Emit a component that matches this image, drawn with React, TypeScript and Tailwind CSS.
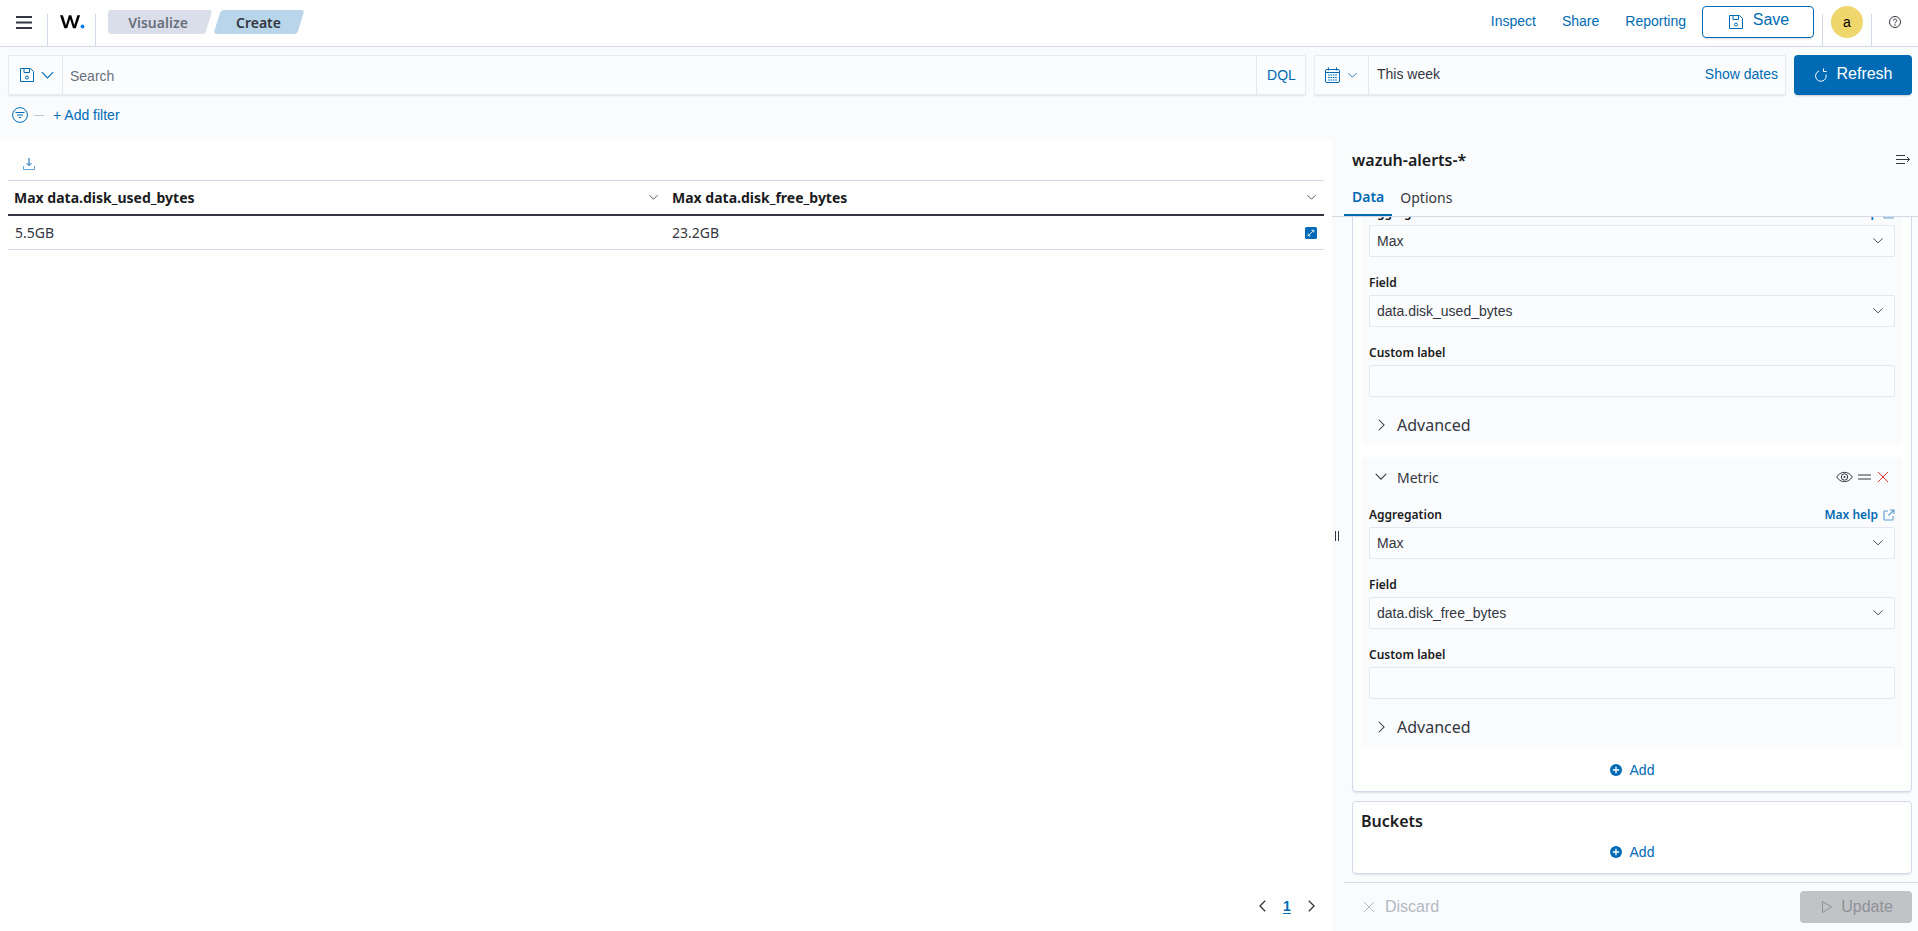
import React from "react";

const P = "#006bb4";

function Chevron({ dir = "down", size = 12, color = "#343741", width = 1.2, className = "" }: { dir?: string; size?: number; color?: string; width?: number; className?: string }) {
  const d = dir === "down" ? "M2 4.5 L8 10.5 L14 4.5" : dir === "right" ? "M5.5 2 L11.5 8 L5.5 14" : "M10.5 2 L4.5 8 L10.5 14";
  return (
    <svg width={size} height={size} viewBox="0 0 16 16" fill="none" className={className}>
      <path d={d} stroke={color} strokeWidth={width} />
    </svg>
  );
}

function SaveIcon({ color = P, size = 16 }: { color?: string; size?: number }) {
  return (
    <svg width={size} height={size} viewBox="0 0 16 16" fill="none">
      <path d="M1.5 1.5 H11.5 L14.5 4.5 V14.5 H1.5 Z" stroke={color} strokeWidth="1" />
      <path d="M5 1.5 V5.5 H10.5 V1.5" stroke={color} strokeWidth="1" />
      <circle cx="8" cy="10.5" r="1.5" stroke={color} strokeWidth="1" />
    </svg>
  );
}

function SelectBox({ value }: { value: string }) {
  return (
    <div className="h-[32px] bg-[#fbfcfd] border border-[#e3e7ef] rounded-[2px] flex items-center justify-between pl-[7px] pr-[10px] font-['Liberation_Sans'] text-[14px] text-[#343741]">
      <span>{value}</span>
      <Chevron />
    </div>
  );
}

function Label({ text, help }: { text: string; help?: boolean }) {
  return (
    <div className="h-[24px] flex items-center justify-between font-['Noto_Sans'] text-[12px] font-semibold text-[#1a1c21]">
      <span>{text}</span>
      {help && (
        <span className="flex items-center gap-[5px] text-[#006bb4] font-semibold">
          Max help
          <svg width="12" height="12" viewBox="0 0 12 12" fill="none">
            <path d="M5 2 H1.5 Q1 2 1 2.5 V10.5 Q1 11 1.5 11 H9.5 Q10 11 10 10.5 V7" stroke="#5b9dcf" strokeWidth="1.1" />
            <path d="M7 1 H11 V5 M11 1 L5.5 6.5" stroke="#5b9dcf" strokeWidth="1.1" />
          </svg>
        </span>
      )}
    </div>
  );
}

function Advanced() {
  return (
    <div className="h-[40px] mt-[8px] -mx-[8px] pl-[13px] flex items-center gap-[9px] font-['Noto_Sans'] text-[16px] text-[#343741]">
      <Chevron dir="right" size={14} />
      <span>Advanced</span>
    </div>
  );
}

function MetricFields({ field }: { field: string }) {
  return (
    <div className="px-[8px]">
      <Label text="Aggregation" help />
      <SelectBox value="Max" />
      <div className="mt-[14px]">
        <Label text="Field" />
        <SelectBox value={field} />
      </div>
      <div className="mt-[14px]">
        <Label text="Custom label" />
        <div className="h-[32px] bg-[#fbfcfd] border border-[#e3e7ef] rounded-[2px]" />
      </div>
      <Advanced />
    </div>
  );
}

function AddButton() {
  return (
    <div className="flex items-center justify-center gap-[8px] font-['Liberation_Sans'] text-[14px] text-[#006bb4]">
      <svg width="12" height="12" viewBox="0 0 12 12">
        <circle cx="6" cy="6" r="6" fill="#006bb4" />
        <path d="M6 2.8 V9.2 M2.8 6 H9.2" stroke="#fff" strokeWidth="1.3" />
      </svg>
      <span>Add</span>
    </div>
  );
}

export default function App() {
  return (
    <div className="w-[1918px] h-[931px] overflow-hidden flex flex-col bg-white font-['Liberation_Sans',sans-serif] text-[14px] text-[#343741]">
      {/* Top nav */}
      <header className="h-[47px] shrink-0 border-b border-[#d3dae6] flex items-start">
        <div className="w-[47px] h-[46px] flex items-center justify-center pb-[1px]">
          <svg width="16" height="13" viewBox="0 0 16 13">
            <path d="M0 1 H16 M0 6.5 H16 M0 12 H16" stroke="#343741" strokeWidth="1.8" />
          </svg>
        </div>
        <div className="mt-[14px] h-[32px] w-[49px] border-x border-[#d3dae6] flex pl-[12px] pt-[0px]">
          <svg width="28" height="16" viewBox="0 0 28 16">
            <path d="M0 1.2 H2.9 L5.9 11.2 L8.9 1.2 H11.3 L14.3 11.2 L17.3 1.2 H20.1 L15.8 14.2 H13 L10.1 5 L7.2 14.2 H4.4 Z" fill="#000" />
            <circle cx="22.5" cy="12.5" r="1.9" fill="#0a7bf0" />
          </svg>
        </div>
        <nav className="ml-[12px] mt-[10px] flex font-['Noto_Sans'] text-[14px] font-semibold">
          <div className="w-[104px] h-[24px] bg-[#d9deea] text-[#69707d] flex items-center justify-center pr-[4px] [clip-path:path('M3_0H101Q104.5_0_103.6_3L98_21Q97_24_94_24H3Q0_24_0_21V3Q0_0_3_0Z')]">
            Visualize
          </div>
          <div className="w-[90px] h-[24px] ml-[2px] bg-[#b8d5ea] text-[#343741] flex items-center justify-center pr-[1px] [clip-path:path('M10_0H87Q90.5_0_89.6_3L84_21Q83_24_80_24H3Q-0.5_24_0.4_21L6_3Q7_0_10_0Z')]">
            Create
          </div>
        </nav>
        <div className="ml-auto flex items-start h-[46px]">
          <div className="flex gap-[26px] pt-[13px] text-[#006bb4] leading-[17px] mr-[16px]">
            <span>Inspect</span>
            <span>Share</span>
            <span>Reporting</span>
          </div>
          <button className="mt-[6px] w-[112px] h-[32px] border border-[#006bb4] rounded-[4px] flex items-center justify-center gap-[9px] pl-[1px] text-[16px] text-[#006bb4] shadow-[0_2px_2px_-1px_rgba(0,0,0,0.15)]">
            <SaveIcon size={16} />
            <span className="pb-[4px]">Save</span>
          </button>
          <div className="ml-[8px] mt-[14px] h-[32px] w-[50px] border-x border-[#d3dae6] relative">
            <div className="absolute left-[8px] -top-[8px] w-[32px] h-[32px] rounded-full bg-[#efd66d] flex items-center justify-center text-[14px] text-[#000]">
              a
            </div>
          </div>
          <div className="w-[46px] flex justify-center pt-[15px]">
            <svg width="14" height="14" viewBox="0 0 14 14" fill="none">
              <circle cx="7" cy="7" r="5.5" stroke="#343741" strokeWidth="1" />
              <path d="M5.3 5.6 C5.3 3.6 8.8 3.6 8.8 5.6 C8.8 7 7 6.8 7 8.4" stroke="#343741" strokeWidth="1" />
              <circle cx="7" cy="10" r="0.7" fill="#343741" />
            </svg>
          </div>
        </div>
      </header>

      {/* Query bar */}
      <section className="h-[93px] shrink-0 bg-[#fafbfd] pl-[8px] pr-[6px] pt-[8px]">
        <div className="flex h-[40px]">
          <div className="w-[1298px] shrink-0 h-[40px] flex bg-[#fbfcfd] border border-[#e8ebf2] shadow-[0_2px_2px_-1px_rgba(152,162,179,0.3)]">
            <div className="w-[54px] border-r border-[#e3e7ef] flex items-center pl-[10px] gap-[5px]">
              <SaveIcon />
              <Chevron color="#006bb4" size={15} />
            </div>
            <div className="flex-1 flex items-center pl-[7px] pt-[2px] text-[#69707d]">Search</div>
            <div className="w-[49px] border-l border-[#e3e7ef] flex items-center justify-center pl-[1px] text-[#006bb4]">DQL</div>
          </div>
          <div className="ml-[8px] w-[472px] shrink-0 h-[40px] flex bg-[#fbfcfd] border border-[#e8ebf2] shadow-[0_2px_2px_-1px_rgba(152,162,179,0.3)]">
            <div className="w-[54px] border-r border-[#e3e7ef] flex items-center pl-[10px] gap-[7px]">
              <svg width="15" height="16" viewBox="0 0 15 16" fill="none">
                <rect x="0.5" y="2.5" width="14" height="13" rx="1.5" stroke="#006bb4" />
                <path d="M0.5 5.5 H14.5 M3.5 0.5 V3.5 M11.5 0.5 V3.5" stroke="#006bb4" />
                <path d="M3 8 H12 M3 10.5 H12 M3 13 H12" stroke="#006bb4" strokeDasharray="1.6 0.8" />
              </svg>
              <Chevron color="#006bb4" size={11} />
            </div>
            <div className="flex-1 flex items-center pl-[8px] text-[#343741] pb-[2px]">This week</div>
            <div className="pr-[7px] flex items-center text-[#006bb4] pb-[2px]">Show dates</div>
          </div>
          <button className="ml-[8px] w-[118px] shrink-0 h-[40px] bg-[#006bb4] rounded-[4px] flex items-center justify-center gap-[8px] pl-[1px] text-[16px] text-white shadow-[0_2px_2px_-1px_rgba(0,0,0,0.2)]">
            <svg width="14" height="14" viewBox="0 0 14 14" fill="none">
              <path d="M5 3 A5.3 5.3 0 1 0 12 6.5" stroke="#fff" strokeWidth="1" />
              <path d="M9.5 0.5 V3.5 H12.5" stroke="#fff" strokeWidth="1" />
            </svg>
            <span className="pb-[3px]">Refresh</span>
          </button>
        </div>
        <div className="mt-[9px] flex items-center h-[22px]">
          <svg width="16" height="16" viewBox="0 0 16 16" fill="none" className="ml-[4px]">
            <circle cx="8" cy="8" r="7.4" stroke="#006bb4" />
            <path d="M3.5 5.5 H12.5 M5 8 H11 M6.8 10.5 H9.2" stroke="#006bb4" />
          </svg>
          <span className="ml-[6px] w-[10px] h-[1px] bg-[#c2c9d6]" />
          <span className="ml-[9px] text-[#006bb4]">+ Add filter</span>
        </div>
      </section>

      {/* Main */}
      <main className="flex-1 flex min-h-0">
        <div className="w-[1332px] shrink-0 bg-white px-[8px] flex flex-col relative">
          <div className="h-[41px] border-b border-[#d3dae6] pl-[15px] flex items-center pt-[8px]">
            <svg width="12" height="12" viewBox="0 0 12 12" fill="none">
              <path d="M6 0 V7.5 M3.5 5 L6 7.5 L8.5 5" stroke="#006bb4" />
              <path d="M0.5 8 V11.5 H11.5 V8" stroke="#006bb4" strokeOpacity="0.6" />
            </svg>
          </div>
          <div className="grid grid-cols-[658px_1fr] h-[35px] border-b-2 border-[#343741] font-['Noto_Sans'] text-[14px] font-bold text-[#1a1c21]">
            <div className="flex items-center justify-between pl-[6px] pr-[7px]">
              <span>Max data.disk_used_bytes</span>
              <Chevron size={11} />
            </div>
            <div className="flex items-center justify-between pl-[6px] pr-[7px]">
              <span>Max data.disk_free_bytes</span>
              <Chevron size={11} />
            </div>
          </div>
          <div className="grid grid-cols-[658px_1fr] h-[34px] border-b border-[#d3dae6] font-['Noto_Sans'] text-[14px] text-[#343741]">
            <div className="flex items-center pl-[7px]">5.5GB</div>
            <div className="flex items-center justify-between pl-[6px] pr-[7px]">
              <span>23.2GB</span>
              <svg width="12" height="12" viewBox="0 0 12 12">
                <rect width="12" height="12" rx="1.5" fill="#006bb4" />
                <path d="M3.5 8.5 L8.5 3.5 M6.5 3.2 H8.8 V5.5 M3.2 6.5 V8.8 H5.5" stroke="#fff" strokeWidth="0.8" fill="none" />
              </svg>
            </div>
          </div>
          <div className="mt-auto mb-[16px] flex items-center justify-end gap-[12px] pr-[6px] h-[18px]">
            <Chevron dir="left" size={14} width={1.5} />
            <span className="font-['Liberation_Sans'] text-[14px] font-bold text-[#006bb4] underline underline-offset-2 w-[10px] text-center">1</span>
            <Chevron dir="right" size={14} width={1.5} />
          </div>
          <svg width="6" height="10" viewBox="0 0 6 10" className="absolute left-[1334px] top-[391px]">
            <path d="M1.5 0 V10 M4.5 0 V10" stroke="#343741" strokeWidth="1" />
          </svg>
        </div>

        <aside className="flex-1 min-w-0 bg-[#fafbfd] flex flex-col">
          <div className="h-[77px] shrink-0 border-b border-[#d3dae6] relative flex flex-col">
            <div className="h-[40px] pl-[20px] pr-[7px] flex items-center justify-between">
              <h2 className="font-['Noto_Sans'] text-[16px] font-semibold text-[#1a1c21]">wazuh-alerts-*</h2>
              <svg width="15" height="12" viewBox="0 0 15 12" fill="none">
                <path d="M0 1.5 H9 M0 5.5 H13.5 M0 9.5 H9 M11 3 L13.5 5.5 L11 8" stroke="#343741" />
              </svg>
            </div>
            <div className="flex pl-[12px] font-['Noto_Sans'] text-[14px] h-[37px]">
              <div className="px-[8px] h-[37px] border-b-2 border-[#006bb4] text-[#006bb4] font-semibold flex items-center pb-[1px]">Data</div>
              <div className="px-[8px] text-[#343741] flex items-center pb-[1px]">Options</div>
            </div>
          </div>

          <div className="flex-1 min-h-0 overflow-hidden pl-[20px] pr-[6px]">
            <div className="-mt-[17px] bg-white border border-[#d3dae6] rounded-[4px] shadow-[0_2px_2px_-1px_rgba(152,162,179,0.3)] px-[8px]">
              <div className="bg-[#fafbfd] rounded-[4px]">
                <MetricFields field="data.disk_used_bytes" />
              </div>
              <div className="mt-[12px] bg-[#fafbfd] rounded-[4px]">
                <div className="h-[40px] pl-[13px] pr-[14px] flex items-center justify-between font-['Noto_Sans'] text-[14px] text-[#343741]">
                  <div className="flex items-center gap-[9px]">
                    <Chevron size={14} />
                    <span>Metric</span>
                  </div>
                  <div className="flex items-center gap-[5px]">
                    <svg width="17" height="14" viewBox="0 0 17 14" fill="none">
                      <path d="M0.7 7 C4.5 0.8 12.5 0.8 16.3 7 C12.5 13.2 4.5 13.2 0.7 7 Z" stroke="#343741" />
                      <circle cx="8.5" cy="7" r="3.2" stroke="#343741" />
                      <circle cx="8.5" cy="7" r="1" fill="#343741" />
                    </svg>
                    <svg width="13" height="8" viewBox="0 0 13 8">
                      <path d="M0 2 H13 M0 6 H13" stroke="#343741" strokeWidth="1" />
                    </svg>
                    <svg width="12" height="12" viewBox="0 0 12 12" className="ml-[1px]">
                      <path d="M1 1 L11 11 M11 1 L1 11" stroke="#d93a33" strokeWidth="1" />
                    </svg>
                  </div>
                </div>
                <div className="pt-[6px]">
                  <MetricFields field="data.disk_free_bytes" />
                </div>
              </div>
              <div className="h-[44px] pt-[2px] flex items-center justify-center">
                <AddButton />
              </div>
            </div>
            <div className="mt-[9px] h-[73px] bg-white border border-[#d3dae6] rounded-[4px] shadow-[0_2px_2px_-1px_rgba(152,162,179,0.3)] px-[8px] pt-[6px]">
              <h3 className="font-['Noto_Sans'] text-[16px] font-semibold text-[#1a1c21] leading-[26px]">Buckets</h3>
              <div className="mt-[6px] h-[24px] flex items-center justify-center">
                <AddButton />
              </div>
            </div>
          </div>

          <footer className="h-[49px] shrink-0 ml-[12px] border-t border-[#d3dae6] flex items-center justify-between pl-[19px] pr-[6px]">
            <div className="flex items-center gap-[10px] text-[16px] text-[#b3b8c2]">
              <svg width="12" height="12" viewBox="0 0 12 12">
                <path d="M1 1 L11 11 M11 1 L1 11" stroke="#b3b8c2" strokeWidth="1" />
              </svg>
              <span>Discard</span>
            </div>
            <button className="w-[112px] h-[32px] rounded-[4px] bg-[#c2c3c6] flex items-center justify-center gap-[8px] pl-[2px] text-[16px] text-[#8f9198]">
              <svg width="12" height="14" viewBox="0 0 12 14" fill="none">
                <path d="M1.5 1.5 L10.5 7 L1.5 12.5 Z" stroke="#8f9198" />
              </svg>
              <span>Update</span>
            </button>
          </footer>
        </aside>
      </main>
    </div>
  );
}
